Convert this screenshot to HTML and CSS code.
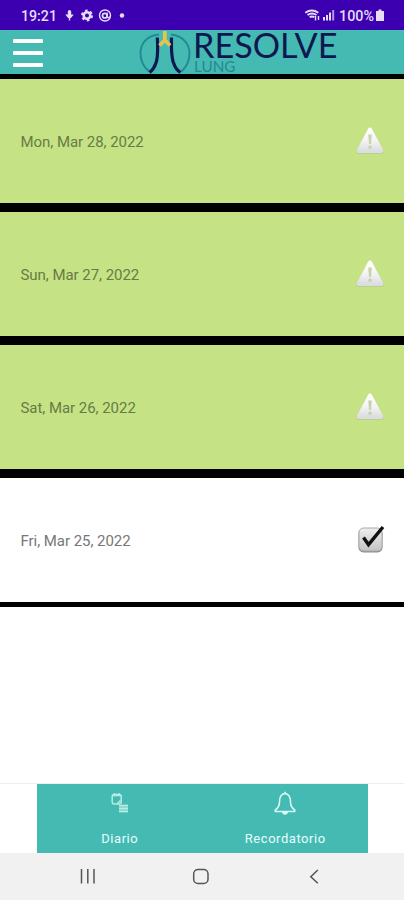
FILE: index.html
```html
<!DOCTYPE html>
<html lang="es">
<head>
<meta charset="utf-8">
<title>Resolve Lung</title>
<link rel="stylesheet" href="styles.css">
</head>
<body>
<div class="screen">
  <div class="status">
    <svg width="404" height="30" viewBox="0 0 404 30">
      <g class="status-text">
        <text x="21" y="21" textLength="36" lengthAdjust="spacingAndGlyphs">19:21</text>
        <text x="339" y="21" textLength="35" lengthAdjust="spacingAndGlyphs">100%</text>
      </g>
      <g fill="#e6dcfa">
        <rect x="67.8" y="10" width="3.4" height="7" rx="1.7"/>
        <path d="M65.3 14.500h8.400L71 18h-3z"/>
        <rect x="68.800" y="17" width="1.400" height="3.500"/>
        <circle cx="122" cy="15.500" r="2.200"/>
        <rect x="323" y="17" width="2" height="3.500"/>
        <rect x="326" y="15" width="2" height="5.500"/>
        <rect x="329" y="12.500" width="2" height="8"/>
        <rect x="332.200" y="10" width="2" height="10.500" opacity=".7"/>
        <path d="M378.500 9.500h3v1.500h2.500v10h-8v-10h2.500z"/>
      </g>
      <g fill="none" stroke="#e6dcfa">
        <circle cx="87" cy="15.500" r="3.300" stroke-width="2.600"/>
        <circle cx="87" cy="15.500" r="5" stroke-width="2" stroke-dasharray="2.600 2.636"/>
        <circle cx="105" cy="15.500" r="5.500" stroke-width="1.400"/>
        <circle cx="104.800" cy="15.700" r="2.300" stroke-width="1.700"/>
        <path d="M107.200 12.500v4.500q1.500 1.500 2.500-.5" stroke-width="1.300"/>
        <path d="M305.300 12.700q6.500-4.500 13 0M307.500 15q4.500-3 9 0M309.700 17.200q2.300-1.500 4.600 0" stroke-width="2"/>
        <path d="M315.500 16v4.500M318.500 20v-4" stroke-width="1.400"/>
      </g>
    </svg>
  </div>
  <header class="header">
    <div class="menu"><span></span><span></span><span></span></div>
    <svg class="logo" width="202" height="44" viewBox="138 30 202 44">
      <g fill="none">
        <path d="M159 34.500C145 36 140.500 45 140.500 53C140.500 61 143.500 67 149 71.500M171 34.500C184 36 189.500 45 189.500 53C189.500 61 186.500 67 181.500 71.500" stroke="#268895" stroke-width="1.900"/>
        <path d="M157.300 37.500Q158.500 58 155.500 64Q154 69 149.500 72.500M171.500 37.500Q171 58 174 64Q175.500 69 180.500 72.500" stroke="#0d1851" stroke-width="3.200"/>
        <path d="M164.800 31v10M165 40l-5.500 5.500M164.600 40l5.500 5.500" stroke="#e6c34f" stroke-width="3.800"/>
      </g>
      <text class="brand" x="193" y="57.500" textLength="144.500" lengthAdjust="spacingAndGlyphs">RESOLVE</text>
      <text class="sub" x="194" y="72.300" textLength="41.500" lengthAdjust="spacingAndGlyphs">LUNG</text>
    </svg>
  </header>
  <main class="list">
    <div class="row pending">
      <span class="date">Mon, Mar 28, 2022</span>
      <svg class="icon" width="32" height="32" viewBox="0 0 32 32"><use href="#warning"/></svg>
    </div>
    <div class="row pending second">
      <span class="date">Sun, Mar 27, 2022</span>
      <svg class="icon" width="32" height="32" viewBox="0 0 32 32"><use href="#warning"/></svg>
    </div>
    <div class="row pending">
      <span class="date">Sat, Mar 26, 2022</span>
      <svg class="icon" width="32" height="32" viewBox="0 0 32 32"><use href="#warning"/></svg>
    </div>
    <div class="row done">
      <span class="date">Fri, Mar 25, 2022</span>
      <svg class="icon" width="32" height="32" viewBox="0 0 32 32">
        <rect x="4.500" y="5.500" width="24" height="24" rx="5" fill="#8b8b8b"/>
        <rect x="5" y="5" width="23" height="23" rx="4.500" fill="url(#box)" stroke="#aaa"/>
        <path d="M9.500 14.500l5 7.200L29 4" fill="none" stroke="#111" stroke-width="3.400"/>
      </svg>
    </div>
  </main>
  <nav class="tabs">
    <div class="tab">
      <svg width="24" height="26" viewBox="0 0 24 26" fill="none" stroke="#b9ece5">
        <rect x="4.200" y="3.500" width="9" height="9.500" rx="2" stroke-width="1.500"/>
        <path d="M5 4.500h7.500M6.500 2v2M11 2v2M9.500 12.500l3-3" stroke-width="1.500"/>
        <rect x="11" y="13.500" width="9" height="8" fill="#8edbd1" stroke="none"/>
        <path d="M11 14.500h9M11 17.500h9M11 20.500h9" stroke-width="1.200"/>
      </svg>
      <span class="label">Diario</span>
    </div>
    <div class="tab">
      <svg width="24" height="26" viewBox="0 0 24 26" fill="none" stroke="#d7faf5" stroke-width="1.600" stroke-linejoin="round">
        <path d="M12 2.500C7.500 3 6.500 7 6.500 11Q6.500 16 2.300 19V20.500h19.400V19Q17.500 16 17.500 11C17.500 7 16.500 3 12 2.500Z"/>
        <path d="M12 .8v2"/>
        <path d="M9 21h6q-.5 2.800-3 2.800T9 21z" fill="#d7faf5" stroke="none"/>
      </svg>
      <span class="label">Recordatorio</span>
    </div>
  </nav>
  <div class="system">
    <svg width="404" height="47" viewBox="0 853 404 47" fill="none" stroke="#555" stroke-width="1.500">
      <path d="M81.500 869v14.500M87.800 869v14.500M94 869v14.500"/>
      <rect x="193.700" y="869.500" width="14.300" height="14" rx="4.300"/>
      <path d="M317.800 870l-7 6.700 7 6.500"/>
    </svg>
  </div>
</div>
<svg class="defs" width="0" height="0">
  <defs>
    <linearGradient id="tri" x1="0" y1="0" x2="0" y2="1"><stop offset="0" stop-color="#fff"/><stop offset=".5" stop-color="#f4f4f5"/><stop offset="1" stop-color="#dcdde0"/></linearGradient>
    <linearGradient id="box" x1="0" y1="0" x2="0" y2="1"><stop offset="0" stop-color="#eee"/><stop offset="1" stop-color="#c4c4c4"/></linearGradient>
    <symbol id="warning" viewBox="0 0 32 32">
      <path d="M16 6L27.800 27.800H4.200Z" fill="#b5c98e" stroke="#b5c98e" stroke-width="4" stroke-linejoin="round"/>
      <path d="M16 5.500L27.500 27H4.500Z" fill="url(#tri)" stroke="url(#tri)" stroke-width="4" stroke-linejoin="round"/>
      <path d="M14.200 10.500h3.600L17 20h-2z" fill="#c8d3ad"/>
      <circle cx="16" cy="23.300" r="1.800" fill="#c8d3ad"/>
    </symbol>
  </defs>
</svg>
</body>
</html>
```

FILE: styles.css
```css
* { box-sizing: border-box; }
body { margin: 0; font-family: Roboto, sans-serif; background: #fff; }
svg { display: block; }
.screen { width: 404px; height: 900px; display: flex; flex-direction: column; overflow: hidden; }
.status { height: 30px; background: #3c00b0; }
.status-text { font-size: 14px; font-weight: 500; fill: #e6dcfa; }
.header { height: 44px; background: #45bab3; display: flex; align-items: flex-start; padding-left: 13px; }
.menu { width: 30px; margin-right: 95px; padding-top: 9px; display: flex; flex-direction: column; gap: 8px; }
.menu span { height: 4px; border-radius: 1px; background: #fff; }
.logo { overflow: visible; }
.brand { font-family: Lato, sans-serif; font-size: 35px; fill: #0d1851; }
.sub { font-family: Lato, sans-serif; font-size: 14.5px; fill: #268895; }
.list { background: #000; padding: 5px 0; display: flex; flex-direction: column; gap: 9px; }
.row { height: 124px; padding: 0 18px 0 20.5px; display: flex; align-items: center; justify-content: space-between; }
.second { height: 124px; }
.pending { background: #c5e384; }
.done { background: #fff; }
.date { padding-top: 1px; font-size: 15px; line-height: 20px; letter-spacing: -.04px; color: #687b46; }
.done .date { color: #777; }
.icon { position: relative; top: -1px; }
.tabs { margin-top: auto; height: 70px; padding: 0 36px 0 37px; border-top: 1px solid #eee; display: flex; background: linear-gradient(#45bab3, #45bab3) 37px 0 / 331px 69px no-repeat; }
.tab { flex: 1; display: flex; flex-direction: column; align-items: center; padding-top: 7px; }
.label { margin-top: 14px; font-size: 13px; line-height: 16px; letter-spacing: .55px; color: #e5fffb; }
.system { height: 47px; background: #f1f1f1; }
.defs { position: absolute; }
```
